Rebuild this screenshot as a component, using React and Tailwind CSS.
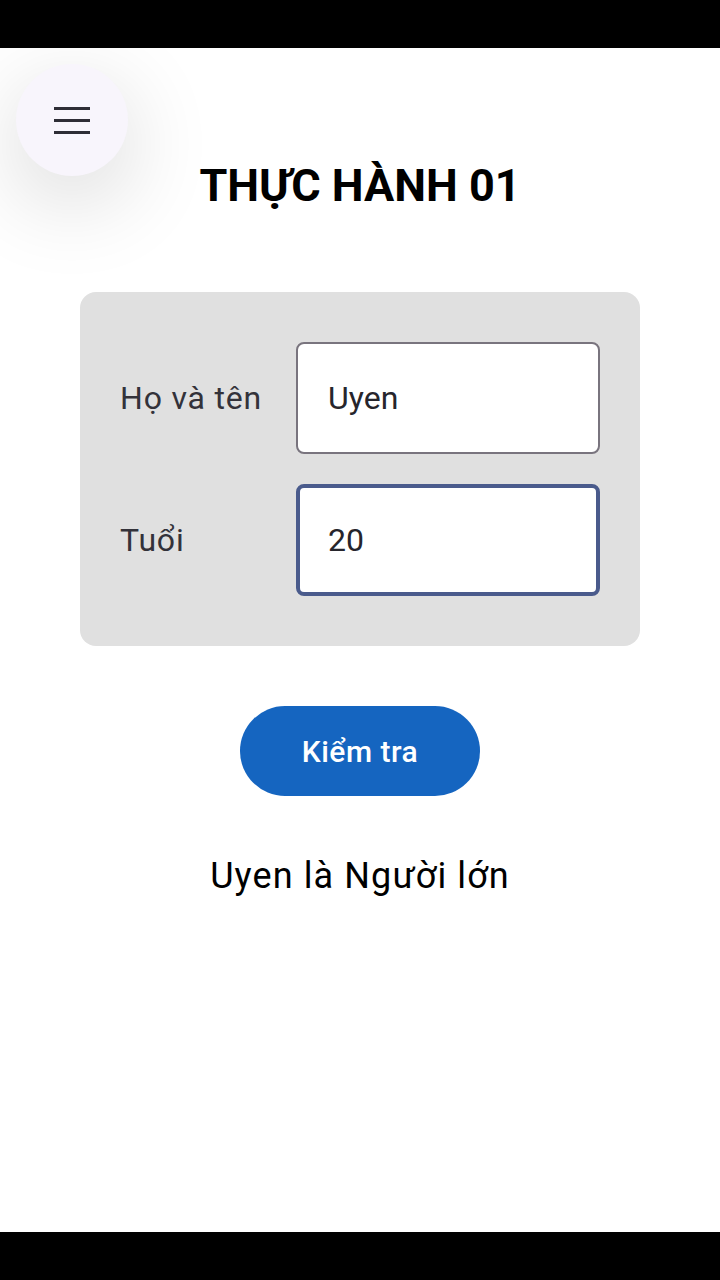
import React, { useState } from "react";

export default function App() {
  const [name, setName] = useState("Uyen");
  const [age, setAge] = useState("20");

  return (
    <div className="w-[720px] h-[1280px] flex flex-col bg-white font-['Roboto',sans-serif]">
      {/* status bar */}
      <div className="h-12 bg-black shrink-0" />

      <div className="flex-1 relative flex flex-col items-center">
        {/* floating menu button */}
        <button className="absolute left-4 top-4 w-28 h-28 rounded-full bg-[#f8f5fc] flex flex-col items-center justify-center gap-[9px] shadow-[0_24px_90px_rgba(0,0,0,0.16)]">
          <span className="block w-9 h-[3px] bg-[#2e2d36]" />
          <span className="block w-9 h-[3px] bg-[#2e2d36]" />
          <span className="block w-9 h-[3px] bg-[#2e2d36]" />
        </button>

        <h1 className="mt-[108px] text-[45px] leading-[60px] font-bold text-black">THỰC HÀNH 01</h1>

        {/* form card */}
        <div className="mt-[76px] w-[560px] bg-[#e0e0e0] rounded-2xl px-10 pt-[50px] pb-[50px] flex flex-col gap-[30px]">
          <div className="flex items-center">
            <label className="w-[176px] text-[32px] tracking-[0.8px] text-[#33323a]">Họ và tên</label>
            <input
              value={name}
              onChange={(e) => setName(e.target.value)}
              className="w-[304px] h-[112px] bg-white rounded-lg border-2 border-[#79747e] px-[30px] text-[32px] text-[#26252c] outline-none"
            />
          </div>
          <div className="flex items-center">
            <label className="w-[176px] text-[32px] tracking-[0.8px] text-[#33323a]">Tuổi</label>
            <input
              value={age}
              onChange={(e) => setAge(e.target.value)}
              className="w-[304px] h-[112px] bg-white rounded-lg border-4 border-[#4a5b8c] px-[28px] text-[32px] text-[#26252c] outline-none"
            />
          </div>
        </div>

        <button className="mt-[60px] w-[240px] h-[90px] rounded-full bg-[#1565c0] text-white text-[30px] font-medium tracking-[0.5px]">
          Kiểm tra
        </button>

        <p className="mt-[53px] text-[36px] tracking-[1.1px] text-black">{name} là Người lớn</p>
      </div>

      {/* nav bar */}
      <div className="h-12 bg-black shrink-0" />
    </div>
  );
}
